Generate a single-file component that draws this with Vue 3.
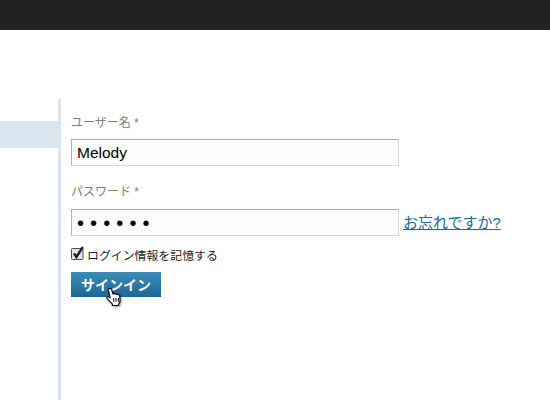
<script setup>
const username = 'Melody'
const password = '••••••'
</script>

<template>
  <div class="page">
    <header class="topbar"></header>
    <main class="main">
      <aside class="side"><div class="side-item"></div></aside>
      <section class="content">
        <form class="form" @submit.prevent>
          <label class="label" for="user">ユーザー名 *</label>
          <input id="user" class="field" type="text" :value="username" />
          <label class="label second" for="pass">パスワード *</label>
          <div class="row">
            <input id="pass" class="field secret" type="text" :value="password" />
            <a class="forgot" href="#">お忘れですか?</a>
          </div>
          <label class="remember">
            <svg class="check" width="13" height="14" viewBox="0 0 13 14">
              <rect x="0.5" y="2.5" width="11.500" height="11" rx="1" fill="#dfe2e8" stroke="#4a4d55" />
              <path d="M3 7.4 L5.400 11 L11.800 1" fill="none" stroke="#1d2026" stroke-width="2.400" />
            </svg>
            <span>ログイン情報を記憶する</span>
          </label>
          <div class="actions">
            <button class="submit" type="submit">サインイン</button>
            <svg class="cursor" width="16" height="20" viewBox="1 1 13.500 19" preserveAspectRatio="none">
              <path d="M3.6 1.6c.9-.6 1.8-.1 2.1.8l1.1 4.2c1-.4 1.9-.3 2.4.4.8-.3 1.5-.2 1.9.5.8-.2 1.4.2 1.5 1l.3 4.4c0 1.6-.6 2.6-1.3 3.4v1.4H6.4v-1.5C5 14.600 3.700 13.200 2.100 11.300c-.7-.9-.4-1.900.6-1.900.6 0 1.200.4 1.800 1L3.100 3.300c-.1-.7 0-1.300.5-1.700z" fill="#fff" stroke="#111" stroke-width="1" stroke-linejoin="round" />
              <path d="M7.500 10.500v3.500M9.500 10.500v3.500M11.500 10.500v3.500" stroke="#111" stroke-width="0.9" fill="none" />
            </svg>
          </div>
        </form>
      </section>
    </main>
  </div>
</template>

<style>
html, body { margin: 0; background: #fff; overflow: hidden; }
</style>

<style scoped>
.page {
  width: 550px;
  height: 400px;
  overflow: hidden;
  background: #fff;
  font-family: "Liberation Sans", "Noto Sans CJK JP", sans-serif;
}
.topbar { height: 30px; background: #222; }
.main { display: flex; margin-top: 69px; height: 301px; }
.side { width: 58px; padding-top: 22px; box-sizing: border-box; }
.side-item { height: 27px; background: #d9e6ef; }
.content { border-left: 3px solid #d9e6ef; padding-left: 10px; flex: 1; }
.form { display: flex; flex-direction: column; padding-top: 17px; }
.label { font-size: 12px; line-height: 14px; color: #7c7c7c; height: 14px; margin-bottom: 9px; }
.second { margin-top: 19px; margin-bottom: 10px; }
.field {
  box-sizing: border-box;
  width: 328px;
  height: 27px;
  padding: 1px 5px 0;
  border: 1px solid #d8d8d8;
  border-top-color: #aaa;
  border-left-color: #b4b4b4;
  background: #fcfcfc;
  font-family: inherit;
  font-size: 15.5px;
  color: #000;
  outline: none;
}
.secret { letter-spacing: 6.1px; font-size: 20px; padding-left: 5px; }
.row { display: flex; align-items: center; gap: 4px; }
.forgot { font-size: 15px; line-height: 18px; color: #1b6a9a; text-decoration: underline; margin-top: 1px; }
.remember { display: flex; align-items: center; gap: 3px; margin-top: 9px; height: 18px; font-size: 11.9px; color: #222; }
.check { flex: none; margin-top: -2px; }
.actions { position: relative; margin-top: 9px; width: 90px; }
.submit {
  display: block;
  width: 90px;
  height: 25px;
  padding: 0 0 2px;
  border: 0;
  background: linear-gradient(#3a8db8, #1c6796);
  color: #fff;
  font-family: inherit;
  font-size: 14px;
  font-weight: bold;
}
.cursor { position: absolute; left: 35px; top: 16px; filter: drop-shadow(1px 1px 1px rgba(0, 0, 0, .4)); }
</style>
